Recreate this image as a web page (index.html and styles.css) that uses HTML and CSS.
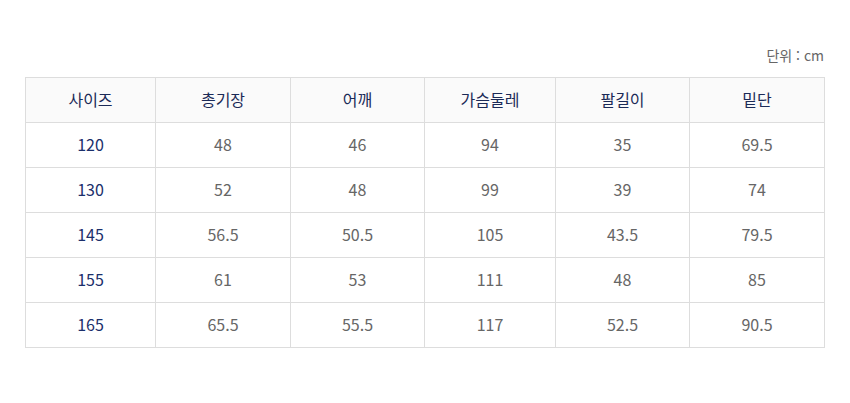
FILE: index.html
```html
<!DOCTYPE html>
<html lang="ko">
<head>
<meta charset="utf-8">
<link rel="stylesheet" href="styles.css">
</head>
<body>
<div class="wrap">
  <p class="unit">단위 : cm</p>
  <table class="size">
    <colgroup>
      <col class="c1"><col class="c2"><col class="c3"><col class="c4"><col class="c5"><col class="c6">
    </colgroup>
    <thead>
      <tr><th>사이즈</th><th>총기장</th><th>어깨</th><th>가슴둘레</th><th>팔길이</th><th>밑단</th></tr>
    </thead>
    <tbody>
      <tr><th>120</th><td>48</td><td>46</td><td>94</td><td>35</td><td>69.5</td></tr>
      <tr><th>130</th><td>52</td><td>48</td><td>99</td><td>39</td><td>74</td></tr>
      <tr><th>145</th><td>56.5</td><td>50.5</td><td>105</td><td>43.5</td><td>79.5</td></tr>
      <tr><th>155</th><td>61</td><td>53</td><td>111</td><td>48</td><td>85</td></tr>
      <tr><th>165</th><td>65.5</td><td>55.5</td><td>117</td><td>52.5</td><td>90.5</td></tr>
    </tbody>
  </table>
</div>
</body>
</html>
```
FILE: styles.css
```css
html, body {
  margin: 0;
  padding: 0;
  background: #fff;
}
body {
  font-family: "Noto Sans CJK KR", "Noto Sans", sans-serif;
}
.wrap {
  width: 799px;
  padding: 45px 0 0 25px;
}
.unit {
  margin: 0 0 11px;
  text-align: right;
  font-size: 14px;
  line-height: 21px;
  color: #666;
}
.size {
  width: 799px;
  table-layout: fixed;
  border-collapse: collapse;
}
.c1 { width: 130px; }
.c2 { width: 135px; }
.c3 { width: 134px; }
.c4 { width: 131px; }
.c5 { width: 134px; }
.c6 { width: 135px; }
.size th, .size td {
  border: 1px solid #dddddd;
  height: 42px;
  padding: 0 0 2px;
  text-align: center;
  vertical-align: middle;
  font-size: 16px;
  font-weight: 400;
}
.size thead th {
  background: #fafafa;
  color: #1b2a57;
}
.size tbody th {
  color: #1b2f6b;
}
.size td {
  color: #666666;
}
```
